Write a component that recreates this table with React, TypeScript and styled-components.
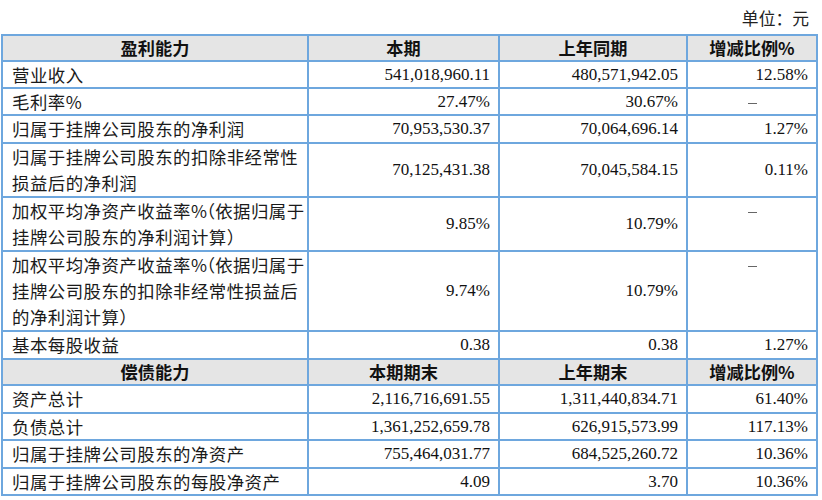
import React from "react";
import styled, { createGlobalStyle } from "styled-components";

const GlobalStyle = createGlobalStyle`
  html, body {
    margin: 0;
    padding: 0;
    background: #ffffff;
  }
  body {
    font-family: "Liberation Serif", "Noto Sans CJK SC", serif;
    color: #111111;
  }
`;

const Page = styled.div`
  width: 822px;
  height: 500px;
  background: #ffffff;
  overflow: hidden;
`;

const Unit = styled.div`
  height: 34px;
  box-sizing: border-box;
  padding: 6px 13px 0 0;
  text-align: right;
  font-family: "Noto Sans CJK SC", sans-serif;
  font-size: 16.8px;
  line-height: 24px;
  color: #222;
`;

const Table = styled.table`
  margin-left: 1px;
  border-collapse: collapse;
  table-layout: fixed;
  width: 817px;
`;

const HeadRow = styled.tr<{ $h: number }>`
  height: ${(p) => p.$h}px;
  background: #e5e5e5;
`;

const Row = styled.tr<{ $h: number }>`
  height: ${(p) => p.$h}px;
`;

const Th = styled.td`
  border: 2px solid #6ea7de;
  padding: 0 8px;
  text-align: center;
  font-family: "Noto Sans CJK SC", sans-serif;
  font-weight: 700;
  font-size: 17.2px;
  line-height: 22px;
  color: #111;
`;

const Label = styled.td<{ $multi: boolean }>`
  border: 2px solid #6ea7de;
  padding: 0 4px 0 9px;
  text-align: left;
  vertical-align: middle;
  font-family: "Noto Sans CJK SC", sans-serif;
  font-size: 17.4px;
  line-height: ${(p) => (p.$multi ? 26 : 24)}px;
  color: #1a1a1a;
  letter-spacing: 0.5px;
  white-space: nowrap;
`;

const Paren = styled.span`
  font-feature-settings: "halt";
  letter-spacing: 0;
  margin-left: -1px;
`;

const Num = styled.td`
  border: 2px solid #6ea7de;
  padding: 0 8px 0 6px;
  text-align: right;
  vertical-align: middle;
  font-family: "Liberation Serif", serif;
  font-size: 17px;
  line-height: 24px;
  color: #111;
`;

const DashCell = styled.td`
  border: 2px solid #6ea7de;
  padding: 0;
  text-align: center;
  vertical-align: top;
  line-height: 25px;
`;

const Dash = styled.span`
  display: inline-block;
  width: 9px;
  height: 1px;
  background: #666;
  vertical-align: middle;
  margin-left: 1px;
`;

type DataRow = {
  label: string[];
  a: string;
  b: string;
  c: string | null;
  h: number;
};

const profit: DataRow[] = [
  { label: ["营业收入"], a: "541,018,960.11", b: "480,571,942.05", c: "12.58%", h: 27 },
  { label: ["毛利率%"], a: "27.47%", b: "30.67%", c: null, h: 27 },
  { label: ["归属于挂牌公司股东的净利润"], a: "70,953,530.37", b: "70,064,696.14", c: "1.27%", h: 28 },
  {
    label: ["归属于挂牌公司股东的扣除非经常性", "损益后的净利润"],
    a: "70,125,431.38",
    b: "70,045,584.15",
    c: "0.11%",
    h: 54,
  },
  {
    label: ["加权平均净资产收益率%（依据归属于", "挂牌公司股东的净利润计算）"],
    a: "9.85%",
    b: "10.79%",
    c: null,
    h: 53,
  },
  {
    label: ["加权平均净资产收益率%（依据归属于", "挂牌公司股东的扣除非经常性损益后", "的净利润计算）"],
    a: "9.74%",
    b: "10.79%",
    c: null,
    h: 80,
  },
  { label: ["基本每股收益"], a: "0.38", b: "0.38", c: "1.27%", h: 28 },
];

const debt: DataRow[] = [
  { label: ["资产总计"], a: "2,116,716,691.55", b: "1,311,440,834.71", c: "61.40%", h: 28 },
  { label: ["负债总计"], a: "1,361,252,659.78", b: "626,915,573.99", c: "117.13%", h: 27 },
  { label: ["归属于挂牌公司股东的净资产"], a: "755,464,031.77", b: "684,525,260.72", c: "10.36%", h: 28 },
  { label: ["归属于挂牌公司股东的每股净资产"], a: "4.09", b: "3.70", c: "10.36%", h: 27 },
];

const renderLine = (line: string) => {
  const parts = line.split("（");
  return parts.map((p, i) => (
    <React.Fragment key={i}>
      {i > 0 && <Paren>（</Paren>}
      {p}
    </React.Fragment>
  ));
};

const Body: React.FC<{ rows: DataRow[] }> = ({ rows }) => (
  <>
    {rows.map((r) => (
      <Row key={r.label.join("")} $h={r.h}>
        <Label $multi={r.label.length > 1}>
          {r.label.map((l, i) => (
            <React.Fragment key={i}>
              {i > 0 && <br />}
              {renderLine(l)}
            </React.Fragment>
          ))}
        </Label>
        <Num>{r.a}</Num>
        <Num>{r.b}</Num>
        {r.c === null ? (
          <DashCell>
            <Dash />
          </DashCell>
        ) : (
          <Num>{r.c}</Num>
        )}
      </Row>
    ))}
  </>
);

export default function App() {
  return (
    <Page>
      <GlobalStyle />
      <Unit>单位：元</Unit>
      <Table>
        <colgroup>
          <col style={{ width: 306 }} />
          <col style={{ width: 191 }} />
          <col style={{ width: 188 }} />
          <col style={{ width: 130 }} />
        </colgroup>
        <tbody>
          <HeadRow $h={26}>
            <Th>盈利能力</Th>
            <Th>本期</Th>
            <Th>上年同期</Th>
            <Th>增减比例%</Th>
          </HeadRow>
          <Body rows={profit} />
          <HeadRow $h={26}>
            <Th>偿债能力</Th>
            <Th>本期期末</Th>
            <Th>上年期末</Th>
            <Th>增减比例%</Th>
          </HeadRow>
          <Body rows={debt} />
        </tbody>
      </Table>
    </Page>
  );
}
